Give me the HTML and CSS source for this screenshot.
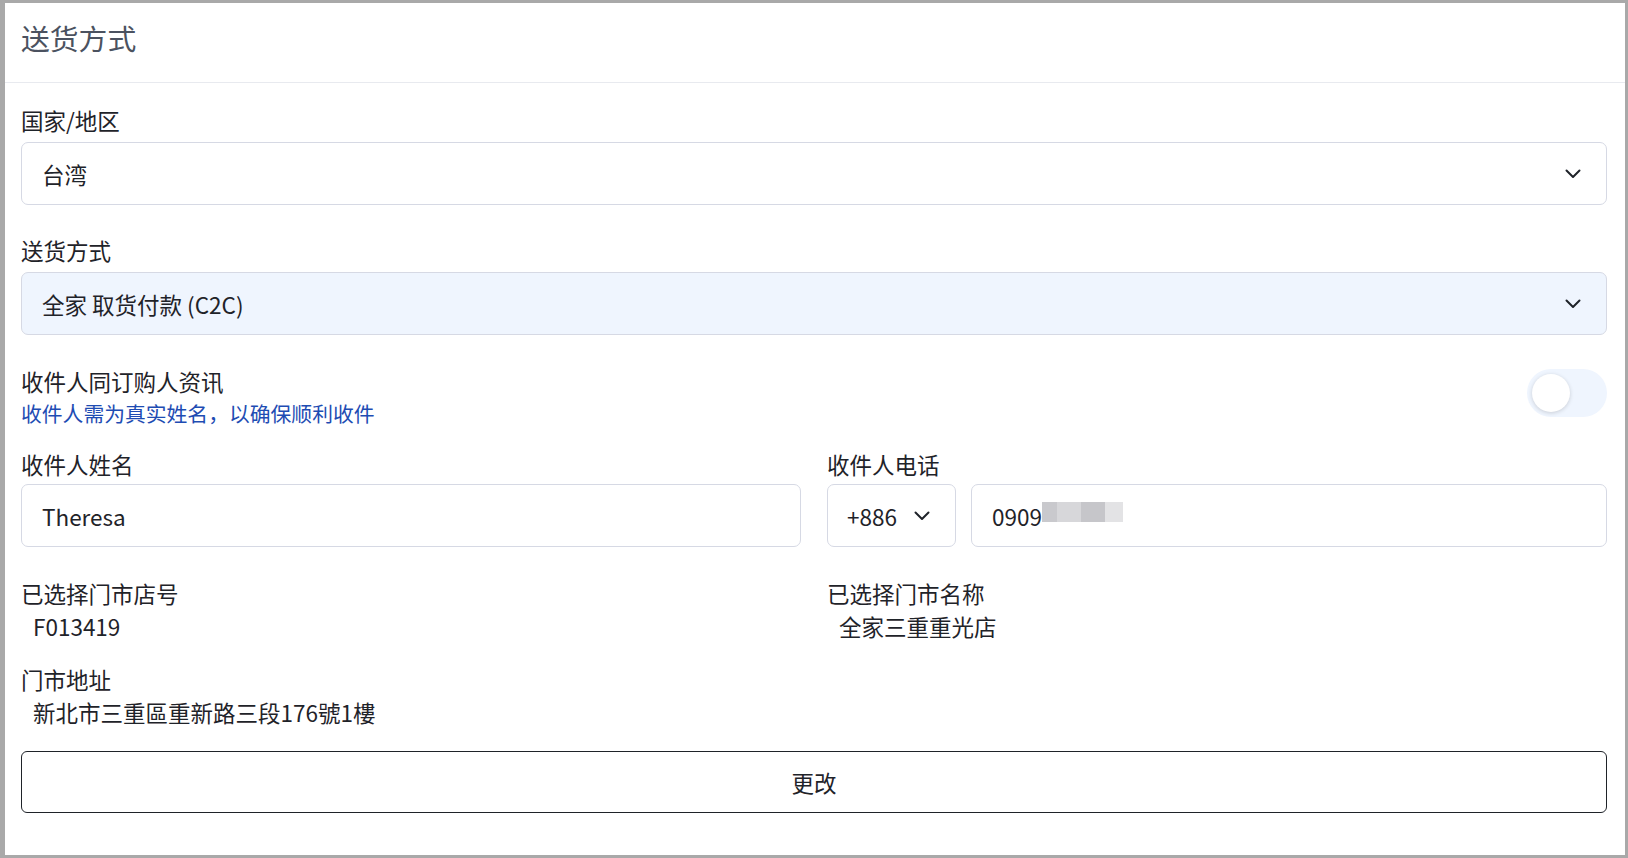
FILE: index.html
```html
<!DOCTYPE html>
<html lang="zh-CN">
<head>
  <meta charset="UTF-8">
  <meta name="viewport" content="width=device-width, initial-scale=1.0">
  <title>送货方式</title>
  <link rel="stylesheet" href="styles.css">
</head>
<body>
  <div class="panel">
    <header class="panel-header">
      <h2 class="panel-title">送货方式</h2>
    </header>

    <div class="panel-body">
      <div class="field">
        <div class="field-label">国家/地区</div>
        <div class="select">
          <span>台湾</span>
          <svg class="chevron" viewBox="0 0 16 10" fill="none" stroke="currentColor" stroke-width="2" stroke-linecap="round" stroke-linejoin="round">
            <polyline points="1.5 1.5 8 8 14.5 1.5"></polyline>
          </svg>
        </div>
      </div>

      <div class="field">
        <div class="field-label">送货方式</div>
        <div class="select select-active">
          <span>全家 取货付款 (C2C)</span>
          <svg class="chevron" viewBox="0 0 16 10" fill="none" stroke="currentColor" stroke-width="2" stroke-linecap="round" stroke-linejoin="round">
            <polyline points="1.5 1.5 8 8 14.5 1.5"></polyline>
          </svg>
        </div>
      </div>

      <div class="toggle-row">
        <div>
          <div class="toggle-label">收件人同订购人资讯</div>
          <div class="hint">收件人需为真实姓名，以确保顺利收件</div>
        </div>
        <span class="switch"><span class="knob"></span></span>
      </div>

      <div class="grid-2">
        <div class="field">
          <div class="field-label">收件人姓名</div>
          <div class="input">Theresa</div>
        </div>
        <div class="field">
          <div class="field-label">收件人电话</div>
          <div class="phone">
            <div class="select code-select">
              <span>+886</span>
              <svg class="chevron small" viewBox="0 0 16 10" fill="none" stroke="currentColor" stroke-width="2" stroke-linecap="round" stroke-linejoin="round">
                <polyline points="1.5 1.5 8 8 14.5 1.5"></polyline>
              </svg>
            </div>
            <div class="input phone-input">
              <span>0909</span><span class="blur"><i class="b1"></i><i class="b2"></i><i class="b3"></i><i class="b4"></i></span>
            </div>
          </div>
        </div>
      </div>

      <div class="grid-2 info-grid">
        <div class="info">
          <div class="info-label">已选择门市店号</div>
          <div class="info-value">F013419</div>
        </div>
        <div class="info">
          <div class="info-label">已选择门市名称</div>
          <div class="info-value">全家三重重光店</div>
        </div>
      </div>

      <div class="info address">
        <div class="info-label">门市地址</div>
        <div class="info-value">新北市三重區重新路三段176號1樓</div>
      </div>

      <button class="btn-outline">更改</button>
    </div>
  </div>
</body>
</html>
```

FILE: styles.css
```css
:root {
  --color-text: #1f2329;
  --color-title: #4b5260;
  --color-hint: #1e4cb3;
  --color-border: #d6d9e4;
  --color-divider: #e8eaef;
  --color-active: #eff5fe;
  --color-frame: #a9a9a9;
  --font-sans: "Noto Sans CJK SC", "Noto Sans", sans-serif;
  --radius: 7px;
}

* {
  margin: 0;
  padding: 0;
  box-sizing: border-box;
}

body {
  height: 858px;
  padding: 3px 3px 3px 5px;
  background-color: var(--color-frame);
  font-family: var(--font-sans);
  font-size: 22.5px;
  color: var(--color-text);
}

.panel {
  height: 100%;
  background-color: #ffffff;
}

.panel-header {
  padding: 15px 16px 24px;
  border-bottom: 1px solid var(--color-divider);
}

.panel-title {
  font-size: 28.8px;
  font-weight: 400;
  line-height: 40px;
  color: var(--color-title);
}

.panel-body {
  padding: 23px 18px 0 16px;
}

.field {
  margin-bottom: 31px;
}

.field-label {
  line-height: 28px;
  margin-bottom: 8px;
}

.select,
.input {
  display: flex;
  align-items: center;
  height: 63px;
  padding: 0 25px 0 20px;
  border: 1px solid var(--color-border);
  border-radius: var(--radius);
  background-color: #ffffff;
}

.select {
  justify-content: space-between;
}

.select-active {
  background-color: var(--color-active);
}

.chevron {
  width: 16px;
  height: 10px;
  color: var(--color-text);
}

.toggle-row {
  display: flex;
  justify-content: space-between;
  align-items: flex-start;
  margin-bottom: 22px;
}

.toggle-label,
.hint {
  line-height: 30px;
}

.hint {
  margin-top: 2px;
  font-size: 20.8px;
  color: var(--color-hint);
}

.switch {
  display: flex;
  align-items: center;
  width: 80px;
  height: 48px;
  margin-top: 3px;
  padding: 0 5px;
  border-radius: 24px;
  background-color: var(--color-active);
}

.knob {
  width: 38px;
  height: 38px;
  border-radius: 50%;
  background-color: #ffffff;
  box-shadow: 0 1px 4px rgba(0, 0, 0, 0.16);
}

.grid-2 {
  display: grid;
  grid-template-columns: 1fr 1fr;
  column-gap: 26px;
}

.grid-2 .field {
  margin-bottom: 0;
}

.grid-2 .field-label {
  margin-bottom: 6px;
}

.phone {
  display: flex;
  gap: 15px;
}

.code-select {
  flex: 0 0 129px;
  padding: 0 25px 0 19px;
}

.phone-input {
  flex: 1;
}

.blur {
  display: inline-flex;
  align-self: flex-start;
  margin-top: 17px;
  height: 20px;
}

.blur i {
  display: block;
  height: 20px;
}

.blur .b1 { width: 15px; background-color: #c9c9cd; }
.blur .b2 { width: 24px; background-color: #d7d7da; }
.blur .b3 { width: 24px; background-color: #c6c6ca; }
.blur .b4 { width: 18px; background-color: #e3e3e5; }

.info-grid {
  margin-top: 32px;
}

.info-label,
.info-value {
  line-height: 28px;
}

.info-value {
  margin-top: 5px;
  padding-left: 12px;
}

.address {
  margin-top: 25px;
}

.address .info-value {
  margin-top: 5px;
}

.btn-outline {
  display: block;
  width: 100%;
  height: 62px;
  margin-top: 25px;
  border: 1px solid var(--color-text);
  border-radius: 6px;
  background-color: #ffffff;
  font-family: var(--font-sans);
  font-size: 22.5px;
  color: var(--color-text);
  cursor: pointer;
}
```
